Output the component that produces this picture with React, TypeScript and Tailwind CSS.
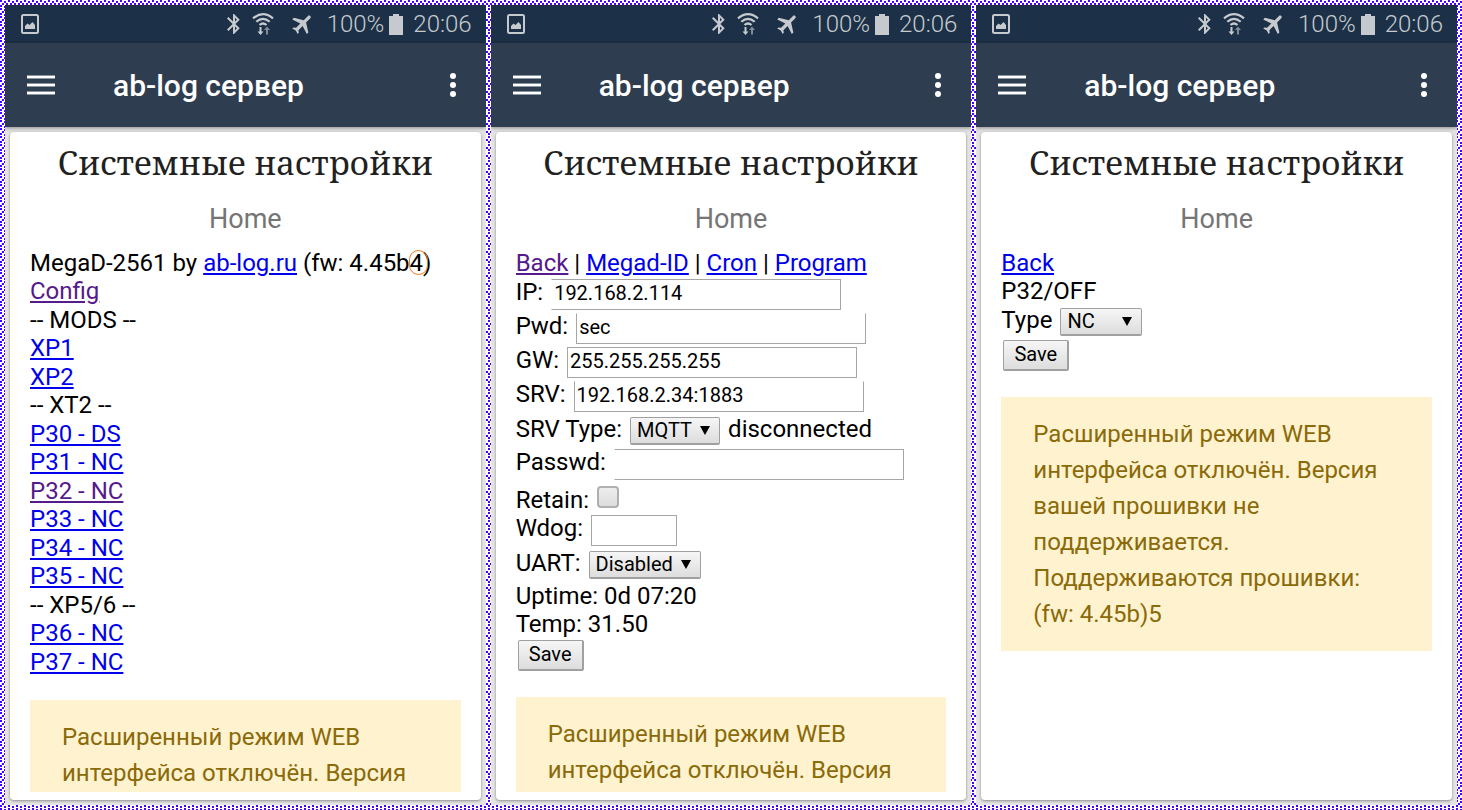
import type { ReactNode } from 'react';
import { MdBluetooth, MdFlight } from 'react-icons/md';

function Dither() {
  return (
    <svg className="absolute inset-0 h-full w-full" aria-hidden="true" shapeRendering="crispEdges">
      <defs>
        <pattern id="dither" width="8" height="8" patternUnits="userSpaceOnUse">
          <rect width="8" height="8" fill="#fff" />
          <path
            fill="#4b00ff"
            d="M0 0h2v2h-2zM4 1h2v2h-2zM2 3h2v2h-2zM6 3h2v2h-2zM0 5h2v2h-2zM4 6h2v2h-2z"
          />
        </pattern>
      </defs>
      <rect width="100%" height="100%" fill="url(#dither)" />
    </svg>
  );
}

function StatusBar() {
  return (
    <div className="flex h-[38px] items-center bg-[#1c3147] pr-[14px] pl-4 text-2xl font-light text-[#c6cace]">
      <svg className="h-5 w-[18px]" viewBox="0 0 18 20" aria-hidden="true">
        <rect x="1" y="1" width="16" height="18" rx="1.5" fill="none" stroke="currentColor" strokeWidth="2" />
        <path fill="currentColor" d="M4 15v-3l2.500-2.500 2 1.500 3-3 2.500 3v4z" />
      </svg>
      <div className="ml-auto flex items-center">
        <MdBluetooth className="size-6" aria-hidden="true" />
        <svg className="ml-1.5 h-[22px] w-[22px]" viewBox="0 0 22 22" fill="none" aria-hidden="true">
          <g stroke="currentColor" strokeWidth="2.200">
            <path d="M1 5.300q10-8.200 20 0" />
            <path d="M4.300 8.800q6.700-6 13.400 0" />
            <path d="M7.500 12q3.500-3 7 0" />
          </g>
          <path fill="currentColor" d="M7.500 14h2v4.500h2l-3 3.500-3-3.500h2z" />
          <path fill="currentColor" opacity=".6" d="M14 21.500h2v-4.500h2l-3-3.500-3 3.500h2z" />
        </svg>
        <MdFlight className="ml-4 size-[26px] rotate-45" aria-hidden="true" />
        <span className="ml-[11px]">100%</span>
        <svg className="mr-2.5 ml-[5px] h-[21px] w-[14px]" viewBox="0 0 14 21" aria-hidden="true">
          <path fill="currentColor" d="M4 0h6v2h4v19h-14v-19h4z" />
        </svg>
        <span>20:06</span>
      </div>
    </div>
  );
}

function AppBar() {
  return (
    <header className="relative flex h-[84px] items-center bg-[#2e3e50] pr-[30px] pl-[22px] text-white shadow-[0_1px_4px_rgba(0,0,0,0.4)]">
      <button type="button" aria-label="Menu" className="flex w-7 flex-col gap-1">
        <span className="h-1 w-full border-y border-[#8b95a0] bg-white" />
        <span className="h-1 w-full border-y border-[#8b95a0] bg-white" />
        <span className="h-1 w-full border-y border-[#8b95a0] bg-white" />
      </button>
      <h1 className="ml-[58px] text-[30px] font-medium">ab-log сервер</h1>
      <button type="button" aria-label="More" className="ml-auto flex flex-col gap-[3px]">
        <span className="size-1.5 rounded-full bg-white" />
        <span className="size-1.5 rounded-full bg-white" />
        <span className="size-1.5 rounded-full bg-white" />
      </button>
    </header>
  );
}

function Phone({ children }: { children: ReactNode }) {
  return (
    <section className="relative flex min-w-0 flex-col overflow-hidden bg-[#e4e4e4]">
      <StatusBar />
      <AppBar />
      <div className="m-[5px] flex min-h-0 flex-1 flex-col overflow-hidden rounded bg-white px-5 pb-2 shadow-[0_1px_3px_rgba(0,0,0,0.4)]">
        <div className="min-h-0 flex-1 overflow-hidden text-2xl/7 text-black">
          <h2 className="pt-[7px] text-center font-['Noto_Serif','DejaVu_Serif',serif] text-[33px]/[48px] text-[#212121]">
            Системные настройки
          </h2>
          <p className="mt-[18px] mb-4 text-center text-[27px]/7 text-[#757575]">Home</p>
          {children}
        </div>
      </div>
    </section>
  );
}

function Link({ visited, children }: { visited?: boolean; children: ReactNode }) {
  return (
    <a href="#" className={visited ? 'text-[#551a8b] underline' : 'text-[#0000ee] underline'}>
      {children}
    </a>
  );
}

function Notice({ children }: { children: ReactNode }) {
  return <p className="bg-[#fff2cf] px-8 py-[19px] leading-9 text-[#8a6a09]">{children}</p>;
}

function Field({ id, label, value, box }: { id: string; label: string; value: string; box: string }) {
  return (
    <div className="flex h-[34px] items-start gap-2">
      <label htmlFor={id}>{label}</label>
      <input
        id={id}
        type="text"
        defaultValue={value}
        className={`mt-px h-[31px] border border-[#a6a6a6] bg-white px-0.5 pb-1 text-xl/6 outline-none ${box}`}
      />
    </div>
  );
}

function Select({ id, value, width }: { id: string; value: string; width: string }) {
  return (
    <span className={`relative h-7 ${width}`}>
      <select
        id={id}
        defaultValue={value}
        className="block h-7 w-full appearance-none rounded-xs border border-b-2 border-[#a0a0a0] bg-linear-to-b from-[#f6f6f6] to-[#dddddd] pb-0.5 pl-1.5 text-xl/6"
      >
        <option>{value}</option>
      </select>
      <svg className="pointer-events-none absolute top-[9px] right-2.5 h-[9px] w-[10px]" viewBox="0 0 10 9" aria-hidden="true">
        <path d="M0 0h10l-5 9z" />
      </svg>
    </span>
  );
}

function SaveButton() {
  return (
    <button
      type="button"
      className="mt-0.5 ml-0.5 block h-[31px] w-[66px] rounded-xs border border-r-2 border-b-2 border-[#a0a0a0] bg-linear-to-b from-[#f6f6f6] to-[#dddddd] pb-0.5 text-xl/6"
    >
      Save
    </button>
  );
}

const ports: { text: string; link?: boolean; visited?: boolean }[] = [
  { text: 'Config', link: true, visited: true },
  { text: '-- MODS --' },
  { text: 'XP1', link: true },
  { text: 'XP2', link: true },
  { text: '-- XT2 --' },
  { text: 'P30 - DS', link: true },
  { text: 'P31 - NC', link: true },
  { text: 'P32 - NC', link: true, visited: true },
  { text: 'P33 - NC', link: true },
  { text: 'P34 - NC', link: true },
  { text: 'P35 - NC', link: true },
  { text: '-- XP5/6 --' },
  { text: 'P36 - NC', link: true },
  { text: 'P37 - NC', link: true },
];

export default function App() {
  return (
    <main className="relative h-screen min-h-[600px] overflow-hidden font-[Roboto,'Noto_Sans',sans-serif]">
      <Dither />
      <div className="grid h-full grid-cols-3 grid-rows-1 gap-[5px] p-[5px]">
        <Phone>
          <div className="mb-6 grid h-[427px] auto-rows-fr">
            <p className="whitespace-nowrap">
              MegaD-2561 by <Link>ab-log.ru</Link> (fw: 4.45b
              <span className="relative">
                4
                <span className="absolute top-px -left-px h-[25px] w-[19px] rounded-full border border-[#f47b20]" />
              </span>
              )
            </p>
            {ports.map((p) => (
              <p key={p.text}>{p.link ? <Link visited={p.visited}>{p.text}</Link> : p.text}</p>
            ))}
          </div>
          <Notice>Расширенный режим WEB интерфейса отключён. Версия</Notice>
        </Phone>

        <Phone>
          <nav className="h-[29px]">
            <Link visited>Back</Link> | <Link>Megad-ID</Link> | <Link>Cron</Link> | <Link>Program</Link>
          </nav>
          <form>
            <Field id="ip" label="IP:" value="192.168.2.114" box="w-[290px] border-l-transparent" />
            <Field id="pwd" label="Pwd:" value="sec" box="w-[290px] border-t-transparent" />
            <Field id="gw" label="GW:" value="255.255.255.255" box="w-[290px]" />
            <Field id="srv" label="SRV:" value="192.168.2.34:1883" box="w-[290px] border-t-transparent" />
            <div className="flex h-[34px] items-center gap-2">
              <label htmlFor="srv-type" className="pb-1">SRV Type:</label>
              <Select id="srv-type" value="MQTT" width="w-[90px]" />
              <span className="pb-1">disconnected</span>
            </div>
            <Field id="passwd" label="Passwd:" value="" box="w-[290px] border-l-transparent" />
            <div className="flex h-8 items-start gap-2 pt-1">
              <label htmlFor="retain">Retain:</label>
              <input
                id="retain"
                type="checkbox"
                className="size-[22px] appearance-none rounded-sm border-2 border-[#b0b0b0] bg-linear-to-b from-[#eeeeee] to-[#dcdcdc]"
              />
            </div>
            <Field id="wdog" label="Wdog:" value="" box="w-[86px]" />
            <div className="flex h-[34px] items-center gap-2">
              <label htmlFor="uart" className="pb-1">UART:</label>
              <Select id="uart" value="Disabled" width="w-28" />
            </div>
            <p>Uptime: 0d 07:20</p>
            <p>Temp: 31.50</p>
            <SaveButton />
          </form>
          <div className="mt-[26px]">
            <Notice>Расширенный режим WEB интерфейса отключён. Версия</Notice>
          </div>
        </Phone>

        <Phone>
          <nav className="h-7">
            <Link>Back</Link>
          </nav>
          <p className="mb-px">P32/OFF</p>
          <form>
            <div className="flex h-8 items-center gap-2">
              <label htmlFor="port-type" className="pb-1">Type</label>
              <Select id="port-type" value="NC" width="w-[82px]" />
            </div>
            <SaveButton />
          </form>
          <div className="mt-[26px]">
            <Notice>
              Расширенный режим WEB интерфейса отключён. Версия вашей прошивки не поддерживается. Поддерживаются
              прошивки: (fw: 4.45b)5
            </Notice>
          </div>
        </Phone>
      </div>
    </main>
  );
}
